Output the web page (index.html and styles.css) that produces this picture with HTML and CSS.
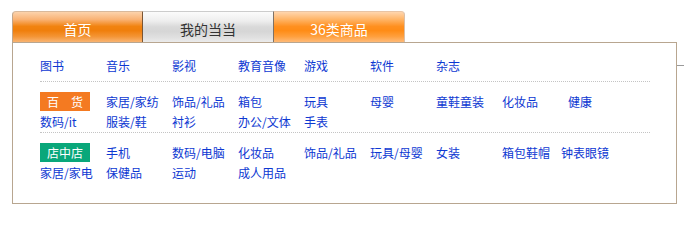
FILE: index.html
```html
<!DOCTYPE html>
<html lang="zh-CN">
<head>
<meta charset="utf-8">
<title>当当导航</title>
<link rel="stylesheet" href="styles.css">
</head>
<body>
<div class="wrap">
  <div class="tabs">
    <a class="tab tab-home" href="#">首页</a>
    <a class="tab tab-my" href="#">我的当当</a>
    <a class="tab tab-cat" href="#">36类商品</a>
  </div>
  <div class="panel-row">
    <div class="panel">
      <div class="sect sect-first">
        <a class="item" href="#">图书</a>
        <a class="item" href="#">音乐</a>
        <a class="item" href="#">影视</a>
        <a class="item" href="#">教育音像</a>
        <a class="item" href="#">游戏</a>
        <a class="item" href="#">软件</a>
        <a class="item" href="#">杂志</a>
      </div>
      <div class="sect sect-mid">
        <span class="item"><span class="badge badge-orange">百　货</span></span>
        <a class="item" href="#">家居/家纺</a>
        <a class="item" href="#">饰品/礼品</a>
        <a class="item" href="#">箱包</a>
        <a class="item" href="#">玩具</a>
        <a class="item" href="#">母婴</a>
        <a class="item" href="#">童鞋童装</a>
        <a class="item" href="#">化妆品</a>
        <a class="item" href="#">健康</a>
        <a class="item" href="#">数码/it</a>
        <a class="item" href="#">服装/鞋</a>
        <a class="item" href="#">衬衫</a>
        <a class="item" href="#">办公/文体</a>
        <a class="item" href="#">手表</a>
      </div>
      <div class="sect sect-last">
        <span class="item"><span class="badge badge-teal">店中店</span></span>
        <a class="item" href="#">手机</a>
        <a class="item" href="#">数码/电脑</a>
        <a class="item" href="#">化妆品</a>
        <a class="item" href="#">饰品/礼品</a>
        <a class="item" href="#">玩具/母婴</a>
        <a class="item" href="#">女装</a>
        <a class="item item-narrow" href="#">箱包鞋帽</a>
        <a class="item" href="#">钟表眼镜</a>
        <a class="item" href="#">家居/家电</a>
        <a class="item" href="#">保健品</a>
        <a class="item" href="#">运动</a>
        <a class="item" href="#">成人用品</a>
      </div>
    </div>
    <div class="stub"></div>
  </div>
</div>
</body>
</html>
```
FILE: styles.css
```css
html, body {
  margin: 0;
  padding: 0;
  background: #ffffff;
}
body {
  font-family: "Noto Sans CJK SC", "Noto Sans", sans-serif;
  font-size: 12px;
}
.wrap {
  padding: 11px 0 0 12px;
}
.tabs {
  display: flex;
  height: 31px;
}
.tab {
  box-sizing: border-box;
  width: 131px;
  height: 31px;
  padding-top: 4px;
  line-height: 27px;
  text-align: center;
  font-size: 14px;
  text-decoration: none;
  border-top: 1px solid #d9b99b;
}
.tab-home {
  color: #ffffff;
  border-left: 1px solid #c0a68c;
  border-right: 1px solid #7a5534;
  border-top-left-radius: 4px;
  background: linear-gradient(#fcd3ac 0%, #f9b274 25%, #f18310 48%, #f07f0c 62%, #f49536 82%, #f9b472 100%);
}
.tab-my {
  color: #333333;
  border-top-color: #cccccc;
  border-right: 1px solid #7e7266;
  background: linear-gradient(#fbfbfb 0%, #eeeeee 30%, #d9d9d9 50%, #d6d6d6 65%, #e0e0e0 85%, #ebebeb 100%);
}
.tab-cat {
  color: #ffffff;
  border-top-color: #e9c4a4;
  border-right: 1px solid #dcbfa6;
  border-top-right-radius: 4px;
  background: linear-gradient(#ffd6ae 0%, #ffb466 25%, #ff9020 48%, #ff8c16 62%, #ffa03e 82%, #ffba78 100%);
}
.panel-row {
  display: flex;
  align-items: flex-start;
}
.panel {
  box-sizing: border-box;
  width: 666px;
  border: 1px solid #b8a690;
  padding: 0 0 20px 27px;
}
.stub {
  flex: 0 0 7px;
  height: 1px;
  margin-top: 23px;
  background: #9a9a9a;
}
.sect {
  width: 610px;
  display: flex;
  flex-wrap: wrap;
  border-bottom: 1px dotted #c4c4c4;
}
.sect-first {
  padding: 13px 0 5px 0;
}
.sect-mid {
  padding: 10px 0 0 0;
}
.sect-last {
  padding: 10px 0 0 0;
  border-bottom: none;
}
.item {
  flex: 0 0 66px;
  height: 20px;
  line-height: 20px;
  color: #0d38d2;
  text-decoration: none;
  white-space: nowrap;
}
.item-narrow {
  flex-basis: 59px;
}
.badge {
  display: block;
  width: 50px;
  height: 19px;
  line-height: 19px;
  text-align: center;
  color: #ffffff;
}
.badge-orange {
  background: #f47a21;
}
.badge-teal {
  background: #09a77a;
}
```
